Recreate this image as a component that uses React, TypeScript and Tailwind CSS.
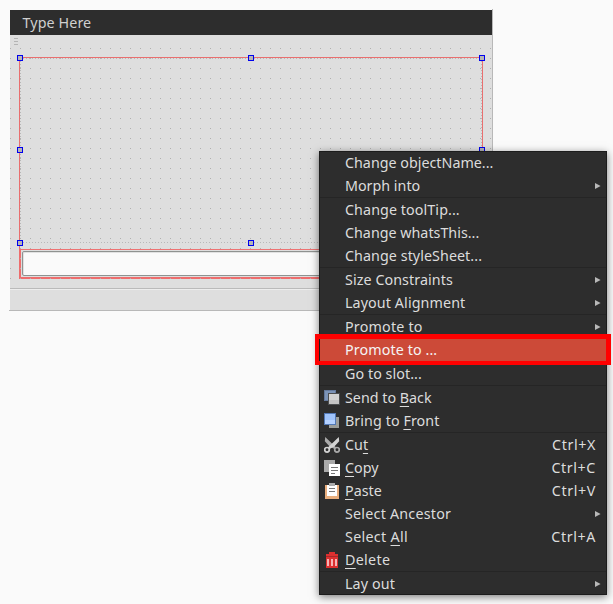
import type { ReactNode } from "react";

type Entry = {
  text: string;
  spacing?: string;
  mnemonic?: number;
  shortcut?: string;
  submenu?: boolean;
  icon?: ReactNode;
  active?: boolean;
};

const BackIcon = () => (
  <svg width="16" height="16" viewBox="0 0 16 16" shapeRendering="crispEdges">
    <rect x="0" y="0" width="12" height="11" fill="#64799c" />
    <rect x="1" y="1" width="10" height="9" fill="#7c94b8" />
    <rect x="4" y="3" width="12" height="12" fill="#4c4e50" />
    <rect x="5" y="4" width="10" height="10" fill="#d2d2d2" />
    <rect x="5" y="10" width="10" height="4" fill="#c4c4c4" />
  </svg>
);

const FrontIcon = () => (
  <svg width="16" height="16" viewBox="0 0 16 16" shapeRendering="crispEdges">
    <rect x="5" y="4" width="10" height="11" fill="#9b9d99" />
    <rect x="0" y="0" width="12" height="12" fill="#5278b5" />
    <rect x="1" y="1" width="10" height="10" fill="#9fc3fa" />
    <rect x="1" y="7" width="10" height="4" fill="#b4d1ff" />
  </svg>
);

const CutIcon = () => (
  <svg width="16" height="16" viewBox="0 0 16 16" fill="none">
    <circle cx="13" cy="12.8" r="2.3" stroke="#aaa" strokeWidth="1.7" />
    <path d="M1.2 0 .8 4.2l4.6 5 5.4 3 1.2-2-3-2.6Z" fill="#aaa" />
    <circle cx="3" cy="12.8" r="2.3" stroke="#d4d4d4" strokeWidth="1.7" />
    <path d="M14.8 0 15.2 4.2l-4.6 5-5.4 3-1.2-2 3-2.6Z" fill="#d4d4d4" />
  </svg>
);

const CopyIcon = () => (
  <svg width="16" height="16" viewBox="0 0 16 16" shapeRendering="crispEdges">
    <rect width="11" height="12" fill="#aaa" />
    <rect x="5" y="4" width="11" height="12" fill="#fff" />
    <path d="M7 7.5h7M7 10.5h7M7 13.5h4" stroke="#777" />
  </svg>
);

const PasteIcon = () => (
  <svg width="16" height="16" viewBox="0 0 16 16" shapeRendering="crispEdges">
    <rect x="1" y="2" width="14" height="14" fill="#e9ae7d" />
    <rect x="3" y="2" width="10" height="11" fill="#fff" />
    <rect x="5" y="0" width="6" height="3" fill="#aaa" />
    <path d="M5 5.5h6M5 8.5h6" stroke="#777" />
  </svg>
);

const DeleteIcon = () => (
  <svg width="16" height="16" viewBox="0 0 16 16" shapeRendering="crispEdges">
    <path d="M5 0h6v2h3v3H2V2h3z" fill="#dc3030" />
    <path d="M2 5h12v11H2z" fill="#dc3030" />
    <path d="M2 4.5h12" stroke="#a32a2a" />
    <path d="M3 7h2v7H3zM7 7h2v7H7zM11 7h2v7h-2z" fill="#f5b5b5" />
  </svg>
);

const groups: Entry[][] = [
  [{ text: "Change objectName..." }, { text: "Morph into", submenu: true }],
  [
    { text: "Change toolTip...", spacing: "tracking-[0.08px]" },
    { text: "Change whatsThis..." },
    { text: "Change styleSheet...", spacing: "tracking-[0.06px]" },
  ],
  [
    { text: "Size Constraints", spacing: "tracking-[0.07px]", submenu: true },
    { text: "Layout Alignment", spacing: "tracking-[0.1px]", submenu: true },
  ],
  [
    { text: "Promote to", spacing: "tracking-[0.2px]", submenu: true },
    { text: "Promote to ...", spacing: "tracking-[0.1px]", active: true },
  ],
  [{ text: "Go to slot...", spacing: "tracking-[0.05px]" }],
  [
    { text: "Send to Back", mnemonic: 8, icon: <BackIcon /> },
    { text: "Bring to Front", spacing: "tracking-[0.07px]", mnemonic: 9, icon: <FrontIcon /> },
  ],
  [
    { text: "Cut", mnemonic: 2, shortcut: "Ctrl+X", icon: <CutIcon /> },
    { text: "Copy", mnemonic: 0, shortcut: "Ctrl+C", icon: <CopyIcon /> },
    { text: "Paste", mnemonic: 0, shortcut: "Ctrl+V", icon: <PasteIcon /> },
    { text: "Select Ancestor", spacing: "tracking-[0.22px]", submenu: true },
    { text: "Select All", spacing: "tracking-[0.3px]", mnemonic: 7, shortcut: "Ctrl+A" },
    { text: "Delete", spacing: "tracking-[0.3px]", mnemonic: 0, icon: <DeleteIcon /> },
  ],
  [{ text: "Lay out", spacing: "tracking-[0.12px]", submenu: true }],
];

function Label({ text, mnemonic }: Entry) {
  if (mnemonic === undefined) return <>{text}</>;
  return (
    <>
      {text.slice(0, mnemonic)}
      <span className="underline decoration-1 underline-offset-[3px] [text-decoration-skip-ink:none]">
        {text[mnemonic]}
      </span>
      {text.slice(mnemonic + 1)}
    </>
  );
}

function Row(entry: Entry) {
  return (
    <div className={`flex h-[23px] items-center pl-[5px] pr-[11px] ${entry.active ? "bg-[#cc4a38] text-[#f4f4f4]" : ""}`}>
      <span className="mr-[5px] flex w-4 shrink-0">{entry.icon}</span>
      <span className={`whitespace-pre leading-[17px] ${entry.spacing ?? ""}`}>
        <Label {...entry} />
      </span>
      {entry.shortcut && <span className="ml-auto leading-[17px] tracking-[0.6px]">{entry.shortcut}</span>}
      {entry.submenu && (
        <svg className="-mr-[5px] ml-auto" width="6" height="6" viewBox="0 0 6 6">
          <path d="M0 0 5.6 3 0 6Z" fill="#b8b8b8" />
        </svg>
      )}
    </div>
  );
}

const Handle = ({ place }: { place: string }) => (
  <span className={`absolute size-1.5 border border-[#0000ee] bg-[#b5b5b5] ${place}`} />
);

function FormCanvas() {
  return (
    <div className="relative h-[254px] border-b border-[#bababa]">
      <svg className="absolute inset-0" width="482" height="252" shapeRendering="crispEdges">
        <defs>
          <pattern id="grid" width="10" height="10" patternUnits="userSpaceOnUse" y="3">
            <rect width="1" height="1" fill="#b0b0b0" />
          </pattern>
        </defs>
        <path d="M9.5 22v222M9 22.5h464M472.5 22v222" stroke="#e96f6f" fill="none" />
        <path d="M10.5 23v184M10 23.5h462M471.5 23v184M10 207.5h462" stroke="#b8b8b8" strokeDasharray="1 2" />
        <path d="M9 214.5h464" stroke="#ee7272" />
        <path d="M10 214v29h463" stroke="#ee6d6d" strokeWidth="2" fill="none" />
        <rect y="13" width="482" height="231" fill="url(#grid)" />
        <path d="M4 3.5h4M4 6.5h4M4 9.5h4" stroke="#b4b4b4" />
      </svg>
      <div className="absolute left-3 top-[216px] h-[25px] w-[458px] rounded-[2px] border border-[#8f9290] bg-[#fafafa] shadow-[inset_1px_1px_#e2e2e2]" />
      <Handle place="left-[7px] top-5" />
      <Handle place="left-[238px] top-5" />
      <Handle place="left-[469px] top-5" />
      <Handle place="left-[7px] top-28" />
      <Handle place="left-[469px] top-28" />
      <Handle place="left-[7px] top-[205px]" />
      <Handle place="left-[238px] top-[205px]" />
    </div>
  );
}

export default function App() {
  return (
    <main className="relative h-[604px] w-[613px] overflow-hidden bg-[#fafafa] pl-[9px] pt-[9px] font-['Noto_Sans',sans-serif] text-[14.3px] text-[#dcdcdc]">
      <section className="h-[302px] w-[484px] border-b border-r border-[#b8b8b8] pl-px pt-px">
        <header className="flex h-[25px] items-center bg-[#2d2d2d] pl-[12.5px]">
          <span className="leading-[17px] tracking-[0.1px] text-[#d0d0d0]">Type Here</span>
        </header>
        <div className="h-[275px] bg-[#dedede]">
          <FormCanvas />
          <div className="h-px bg-[#ededed]" />
        </div>
      </section>

      <nav className="absolute left-[319px] top-[151px] w-72 bg-[#2d2d2d] shadow-[0_2px_8px_rgba(0,0,0,0.5)]">
        {groups.map((group, index) => (
          <div key={index} className={index > 0 ? "border-t border-[#252525]" : ""}>
            {group.map((entry) => (
              <Row key={entry.text} {...entry} />
            ))}
          </div>
        ))}
        <div className="pointer-events-none absolute inset-0 border border-[#1c1c1c]" />
      </nav>
      <div className="absolute left-[315px] top-[334px] h-[31px] w-[296px] border-b-4 border-l-4 border-r-[5px] border-t-[5px] border-[#ff0000]" />
    </main>
  );
}
